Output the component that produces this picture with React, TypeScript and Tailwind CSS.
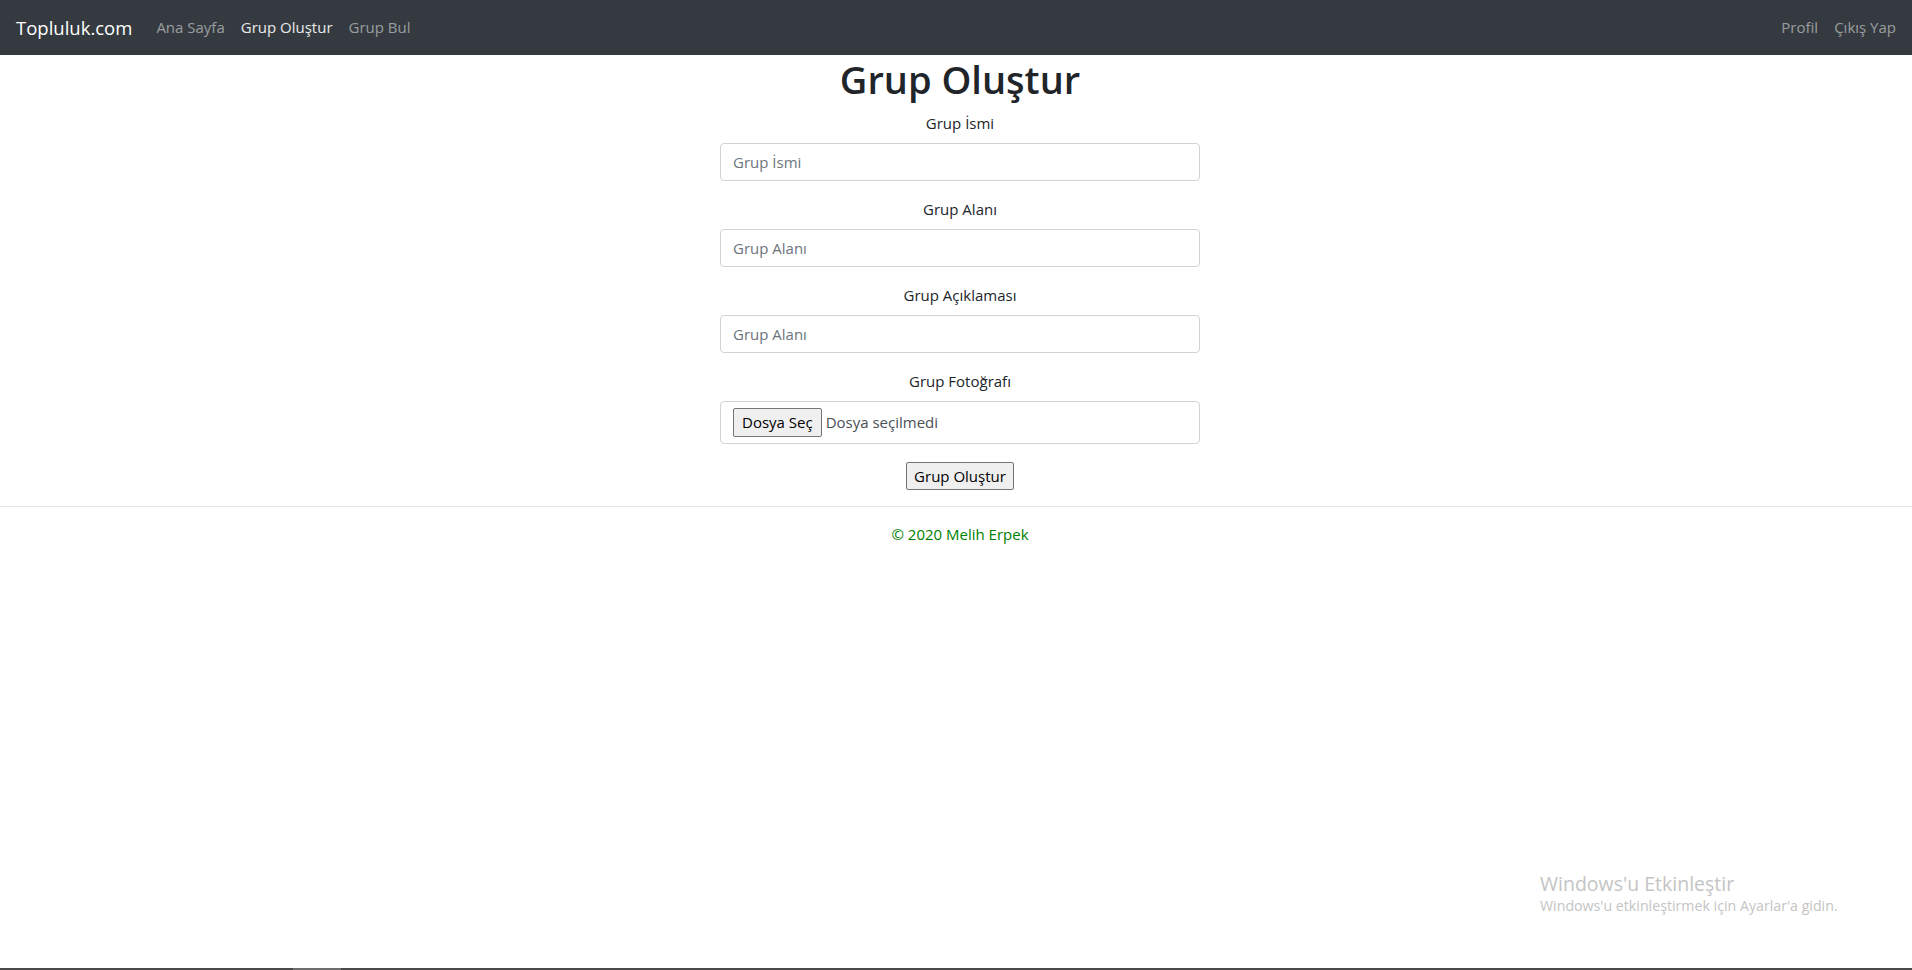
import React from 'react';

const font = { fontFamily: '"Open Sans", "Noto Sans", Arial, sans-serif' };

function Field({ label, placeholder }: { label: string; placeholder: string }) {
  return (
    <div className="mb-4 flex flex-col items-center">
      <label className="mb-2 text-[15px] leading-6 text-[#212529]">{label}</label>
      <input
        className="h-[38px] w-full rounded border border-[#ced4da] bg-white px-3 text-[15px] text-[#495057] placeholder:text-[#6c757d] outline-none"
        placeholder={placeholder}
      />
    </div>
  );
}

export default function App() {
  return (
    <div className="relative flex h-[970px] flex-col overflow-hidden bg-white" style={font}>
      {/* Navbar */}
      <nav className="flex h-[55px] items-center bg-[#343a40] px-4">
        <span className="mr-4 text-[18.5px] text-white">Topluluk.com</span>
        <ul className="flex text-[15px]">
          <li className="px-2 text-white/50">Ana Sayfa</li>
          <li className="px-2 text-white/90">Grup Oluştur</li>
          <li className="px-2 text-white/50">Grup Bul</li>
        </ul>
        <ul className="ml-auto flex text-[15px]">
          <li className="px-2 text-white/50">Profil</li>
          <li className="pl-2 text-white/50">Çıkış Yap</li>
        </ul>
      </nav>

      {/* Content */}
      <main className="flex-1 pl-2">
        <div className="mx-auto w-[480px]">
          <h1 className="mb-2 text-center text-[38px] font-semibold leading-[48px] text-[#212529]">Grup Oluştur</h1>
          <Field label="Grup İsmi" placeholder="Grup İsmi" />
          <Field label="Grup Alanı" placeholder="Grup Alanı" />
          <Field label="Grup Açıklaması" placeholder="Grup Alanı" />
          <div className="mb-4 flex flex-col items-center">
            <label className="mb-2 text-[15px] leading-6 text-[#212529]">Grup Fotoğrafı</label>
            <div className="flex h-[43px] w-full items-center rounded border border-[#ced4da] px-3 text-[15px] text-[#495057]">
              <button className="mr-1 h-[29px] rounded-[2px] border border-[#767676] bg-[#efefef] px-[8px] text-black">Dosya Seç</button>
              <span>Dosya seçilmedi</span>
            </div>
          </div>
          <div className="flex justify-center pt-[2px]">
            <button className="h-[28px] rounded-[2px] border border-[#767676] bg-[#efefef] px-[7px] text-[15px] text-black">Grup Oluştur</button>
          </div>
        </div>
        <hr className="mt-4 ml-[-8px] border-t border-black/10" />
        <p className="mt-4 text-center text-[15px] text-[#008000]">© 2020 Melih Erpek</p>
      </main>

      {/* Bottom edge */}
      <div className="flex h-[2px] bg-[#4a4a4a]">
        <div className="ml-[293px] w-[48px] bg-[#6d6d6d]" />
      </div>

      {/* Windows watermark */}
      <div className="pointer-events-none absolute left-[1540px] top-[872px] text-[#c4c4c4]">
        <div className="text-[19.5px] leading-6">Windows'u Etkinleştir</div>
        <div className="text-[14.2px] leading-5">Windows'u etkinleştirmek için Ayarlar'a gidin.</div>
      </div>
    </div>
  );
}
